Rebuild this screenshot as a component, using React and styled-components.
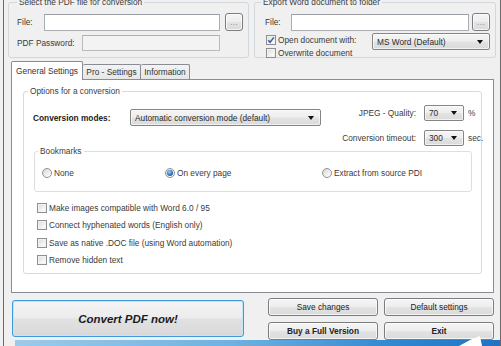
import React from 'react';
import styled, { createGlobalStyle } from 'styled-components';

const Global = createGlobalStyle`
  html, body { margin: 0; padding: 0; background: #f0f0f0; }
  body {
    font-family: 'Liberation Sans', Arial, sans-serif;
    font-size: 8.3px;
    line-height: 10px;
    color: #333;
  }
  #root { width: 501px; height: 346px; overflow: hidden; }
`;

const Window = styled.div`
  width: 498px;
  height: 346px;
  margin-left: 3px;
  box-sizing: border-box;
  border-left: 1px solid #6a6a6a;
  border-right: 1px solid #6a6a6a;
  background: #f0f0f0;
  display: flex;
  flex-direction: column;
  overflow: hidden;
`;

const TopRow = styled.div`
  display: flex;
  gap: 5px;
  margin-top: -3px;
  padding-left: 4px;
`;

const Group = styled.fieldset`
  margin: 0;
  padding: 0;
  min-width: 0;
  box-sizing: border-box;
  width: ${p => p.$w}px;
  height: ${p => p.$h}px;
  margin-left: ${p => p.$ml || 0}px;
  border: 1px solid ${p => p.$c || '#d2d7db'};
  border-radius: 3px;
`;

const Legend = styled.legend`
  padding: 0 2px;
  margin-left: ${p => p.$x}px;
  line-height: 10px;
  color: #3c3c3c;
`;

const GroupBody = styled.div`
  padding: ${p => p.$pad};
  display: flex;
  flex-direction: column;
  gap: ${p => p.$gap || 0}px;
`;

const FieldRow = styled.div`
  display: flex;
  align-items: center;
  height: ${p => p.$h}px;
`;

const Label = styled.span`
  width: ${p => p.$w}px;
  flex: none;
  white-space: nowrap;
  font-weight: ${p => (p.$bold ? 700 : 400)};
  color: ${p => (p.$bold ? '#222' : '#3a3a3a')};
`;

const TextInput = styled.div`
  box-sizing: border-box;
  width: ${p => p.$w}px;
  height: ${p => p.$h}px;
  flex: none;
  border: 1px solid ${p => (p.$disabled ? '#b9bcbf' : '#abadb3')};
  border-top-color: ${p => (p.$disabled ? '#adb0b3' : '#9a9da3')};
  background: ${p => (p.$disabled ? '#f3f3f3' : '#ffffff')};
`;

const winGradient = `linear-gradient(#f5f5f5 0%, #eeeeee 48%, #e3e3e3 52%, #dadada 100%)`;

const Btn = styled.div`
  box-sizing: border-box;
  width: ${p => p.$w}px;
  height: ${p => p.$h}px;
  margin-left: ${p => p.$ml || 0}px;
  flex: none;
  border: 1px solid #7c7c7c;
  border-radius: 3px;
  background: ${winGradient};
  box-shadow: inset 0 0 0 1px rgba(255, 255, 255, 0.7);
  display: flex;
  align-items: center;
  justify-content: center;
  color: ${p => (p.$muted ? '#777' : '#222')};
  font-weight: ${p => (p.$bold ? 700 : 400)};
  white-space: nowrap;
`;

const Dots = styled.span`
  font-size: 8px;
  letter-spacing: 0.5px;
  margin-top: 2px;
`;

const Combo = styled.div`
  box-sizing: border-box;
  width: ${p => p.$w}px;
  height: ${p => p.$h}px;
  margin-left: ${p => p.$ml || 0}px;
  margin-top: ${p => p.$mt || 0}px;
  flex: none;
  border: 1px solid #858585;
  border-radius: 2px;
  background: ${winGradient};
  box-shadow: inset 0 0 0 1px rgba(255, 255, 255, 0.6);
  display: flex;
  align-items: center;
  justify-content: space-between;
  padding: 0 6px 0 4px;
  color: #2a2a2a;
  white-space: nowrap;
`;

const Arrow = styled.span`
  width: 0;
  height: 0;
  border-left: 3.5px solid transparent;
  border-right: 3.5px solid transparent;
  border-top: 4px solid #111;
  flex: none;
`;

const CheckItem = styled.div`
  display: flex;
  align-items: center;
  gap: 2px;
  height: 10px;
  margin-left: ${p => p.$ml || 0}px;
  white-space: nowrap;
  color: #3a3a3a;
`;

const Box = styled.span`
  box-sizing: border-box;
  width: 10px;
  height: 10px;
  flex: none;
  border: 1px solid #8e8f8f;
  background: linear-gradient(135deg, #d9d9d9, #f7f7f7 70%, #ffffff);
  box-shadow: inset 0 0 0 1px #f2f2f2;
  display: flex;
  align-items: center;
  justify-content: center;
`;

const Check = ({ checked }) => (
  <Box>
    {checked && (
      <svg width="8" height="8" viewBox="0 0 8 8">
        <path d="M1.2 4.2 L3.1 6.3 L6.9 1.4" fill="none" stroke="#3b5aa0" strokeWidth="1.5" />
      </svg>
    )}
  </Box>
);

const RadioCircle = styled.span`
  box-sizing: border-box;
  width: 10px;
  height: 10px;
  flex: none;
  border-radius: 50%;
  border: 1px solid #929292;
  background: linear-gradient(135deg, #d4d4d4, #f8f8f8 75%);
  display: flex;
  align-items: center;
  justify-content: center;
`;

const Dot = styled.span`
  width: 6px;
  height: 6px;
  border-radius: 50%;
  background: radial-gradient(circle at 40% 35%, #a9d6f7 0%, #2f79c9 50%, #123f86 100%);
`;

const RadioItem = styled.div`
  display: flex;
  align-items: center;
  gap: 2px;
  height: 10px;
  white-space: nowrap;
  color: #3a3a3a;
`;

const Radio = ({ checked, children }) => (
  <RadioItem>
    <RadioCircle>{checked && <Dot />}</RadioCircle>
    <span>{children}</span>
  </RadioItem>
);

const CheckBlock = styled.div`
  display: flex;
  align-items: flex-start;
  margin-top: ${p => p.$mt || 0}px;
`;

const CheckColumn = styled.div`
  display: flex;
  flex-direction: column;
  gap: ${p => p.$gap}px;
  width: ${p => p.$w || 'auto'};
  margin-top: ${p => p.$mt || 0}px;
  margin-left: ${p => p.$ml || 0}px;
`;

const TabStrip = styled.div`
  display: flex;
  align-items: flex-end;
  margin-top: 3px;
  padding-left: 7px;
  height: 18px;
  position: relative;
  z-index: 1;
`;

const Tab = styled.div`
  box-sizing: border-box;
  width: ${p => p.$w}px;
  height: ${p => (p.$active ? 19 : 15)}px;
  margin-bottom: ${p => (p.$active ? -1 : 0)}px;
  border: 1px solid #898c95;
  border-bottom: none;
  border-left-width: ${p => (p.$active ? 1 : 0)}px;
  border-radius: 2px 2px 0 0;
  background: ${p => (p.$active ? '#ffffff' : 'linear-gradient(#f3f3f3, #e6e6e6)')};
  display: flex;
  align-items: center;
  justify-content: center;
  padding-bottom: ${p => (p.$active ? 1 : 0)}px;
  color: #333;
  white-space: nowrap;
`;

const Panel = styled.div`
  box-sizing: border-box;
  margin-left: 7px;
  width: 483px;
  height: 214px;
  border: 1px solid #898c95;
  background: #ffffff;
  padding: 6px 0 0 11px;
`;

const OptionsRow = styled.div`
  display: flex;
  height: 42px;
`;

const ModeGroup = styled.div`
  display: flex;
  align-items: center;
  margin-top: 5px;
  height: 17px;
`;

const SideColumn = styled.div`
  margin-left: auto;
  margin-top: 1px;
  display: flex;
  flex-direction: column;
  align-items: flex-end;
  gap: 9px;
`;

const SideRow = styled.div`
  display: flex;
  align-items: center;
  height: 16px;
`;

const Unit = styled.span`
  width: 13px;
  padding-left: 4px;
  white-space: nowrap;
  color: #3a3a3a;
`;

const RadioRow = styled.div`
  display: grid;
  grid-template-columns: 123px 157px auto;
  padding: 12px 0 0 7px;
`;

const BottomRow = styled.div`
  display: flex;
  align-items: flex-start;
  margin-top: 5px;
  padding-left: 8px;
`;

const ConvertButton = styled.div`
  box-sizing: border-box;
  width: 232px;
  height: 37px;
  margin-top: 2px;
  border: 1px solid #3d9ae0;
  border-radius: 3px;
  background: linear-gradient(#f4f4f4 0%, #ececec 48%, #e1e1e1 52%, #d9d9d9 100%);
  box-shadow: inset 0 0 0 1px #c4e4f7;
  display: flex;
  align-items: center;
  justify-content: center;
  font-size: 11.5px;
  font-weight: 700;
  font-style: italic;
  color: #1c1c1c;
`;

const ButtonGrid = styled.div`
  display: grid;
  grid-template-columns: 110px 110px;
  grid-auto-rows: 18px;
  gap: 6px;
  margin-left: 24px;
`;

const BlueBar = styled.div`
  margin-top: auto;
  margin-left: 11px;
  height: 6px;
  position: relative;
  background: linear-gradient(90deg, #9ccbea 0%, #6fb1e0 45%, #2d86cf 80%, #1f74c2 100%);
`;

const BarLogo = styled.svg`
  position: absolute;
  right: 15px;
  bottom: 0;
`;

export default function App() {
  return (
    <>
      <Global />
      <Window>
        <TopRow>
          <Group $w={241} $h={61}>
            <Legend $x={8}>Select the PDF file for conversion</Legend>
            <GroupBody $pad="6px 0 0 8px" $gap={4}>
              <FieldRow $h={18}>
                <Label $w={27}>File:</Label>
                <TextInput $w={176} $h={17} />
                <Btn $w={18} $h={18} $ml={5} $muted><Dots>...</Dots></Btn>
              </FieldRow>
              <FieldRow $h={16}>
                <Label $w={65}>PDF Password:</Label>
                <TextInput $w={138} $h={16} $disabled />
              </FieldRow>
            </GroupBody>
          </Group>
          <Group $w={242} $h={61}>
            <Legend $x={6}>Export Word document to folder</Legend>
            <GroupBody $pad="6px 0 0 10px">
              <FieldRow $h={18}>
                <Label $w={26}>File:</Label>
                <TextInput $w={178} $h={17} />
                <Btn $w={18} $h={18} $ml={3} $muted><Dots>...</Dots></Btn>
              </FieldRow>
              <CheckBlock $mt={2}>
                <CheckColumn $gap={3} $w="107px" $mt={2} $ml={1}>
                  <CheckItem><Check checked /><span>Open document with:</span></CheckItem>
                  <CheckItem><Check /><span>Overwrite document</span></CheckItem>
                </CheckColumn>
                <Combo $w={118} $h={17} $ml={-1}>
                  <span>MS Word (Default)</span>
                  <Arrow />
                </Combo>
              </CheckBlock>
            </GroupBody>
          </Group>
        </TopRow>

        <TabStrip>
          <Tab $w={72} $active>General Settings</Tab>
          <Tab $w={58}>Pro - Settings</Tab>
          <Tab $w={49}>Information</Tab>
        </TabStrip>

        <Panel>
          <Group $w={459} $h={188} $c="#dadada">
            <Legend $x={4}>Options for a conversion</Legend>
            <GroupBody $pad="8px 0 0 9px">
              <OptionsRow>
                <ModeGroup>
                  <Label $w={97} $bold>Conversion modes:</Label>
                  <Combo $w={191} $h={17}>
                    <span>Automatic conversion mode (default)</span>
                    <Arrow />
                  </Combo>
                </ModeGroup>
                <SideColumn>
                  <SideRow>
                    <Label>JPEG - Quality:</Label>
                    <Combo $w={40} $h={16} $ml={8}><span>70</span><Arrow /></Combo>
                    <Unit>%</Unit>
                  </SideRow>
                  <SideRow>
                    <Label>Conversion timeout:</Label>
                    <Combo $w={40} $h={16} $ml={8}><span>300</span><Arrow /></Combo>
                    <Unit>sec.</Unit>
                  </SideRow>
                </SideColumn>
              </OptionsRow>
              <Group $w={438} $h={46} $ml={1} $c="#dedede">
                <Legend $x={3}>Bookmarks</Legend>
                <RadioRow>
                  <Radio>None</Radio>
                  <Radio checked>On every page</Radio>
                  <Radio>Extract from source PDI</Radio>
                </RadioRow>
              </Group>
              <CheckColumn $gap={7.4} $mt={11} $ml={4}>
                <CheckItem><Check /><span>Make images compatible with Word 6.0 / 95</span></CheckItem>
                <CheckItem><Check /><span>Connect hyphenated words (English only)</span></CheckItem>
                <CheckItem><Check /><span>Save as native .DOC file (using Word automation)</span></CheckItem>
                <CheckItem><Check /><span>Remove hidden text</span></CheckItem>
              </CheckColumn>
            </GroupBody>
          </Group>
        </Panel>

        <BottomRow>
          <ConvertButton>Convert PDF now!</ConvertButton>
          <ButtonGrid>
            <Btn $h={18}>Save changes</Btn>
            <Btn $h={18}>Default settings</Btn>
            <Btn $h={18} $bold>Buy a Full Version</Btn>
            <Btn $h={18} $bold>Exit</Btn>
          </ButtonGrid>
        </BottomRow>

        <BlueBar>
          <BarLogo width="26" height="10" viewBox="0 0 26 10" overflow="visible">
            <polygon points="0,10 12,3.5 21,0 23,10" fill="#ffffff" />
          </BarLogo>
        </BlueBar>
      </Window>
    </>
  );
}
